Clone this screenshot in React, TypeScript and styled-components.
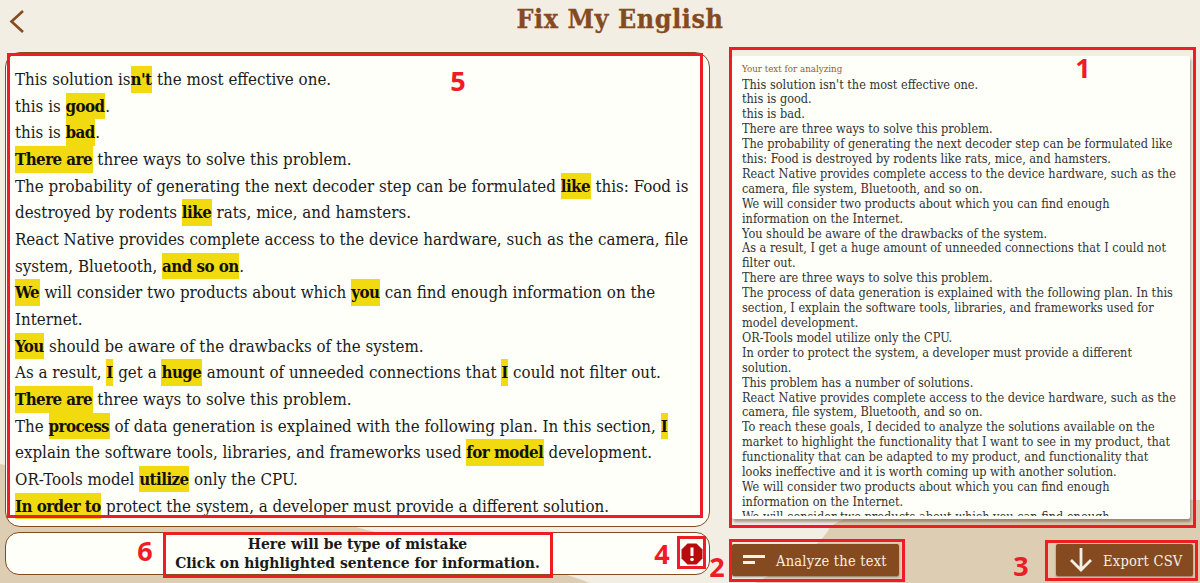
import React from "react";
import styled, { createGlobalStyle } from "styled-components";

const Global = createGlobalStyle`
  html, body { margin: 0; padding: 0; height: 583px; overflow: hidden; }
  #root { height: 583px; }
`;
const Fam = `"DejaVu Serif Condensed", "DejaVu Serif", serif`;
const Brown = "#854a20";

const Page = styled.div`
  position: relative; width: 1200px; height: 583px; overflow: hidden; background: #f3eee3;
  font-family: ${Fam}; display: flex; flex-direction: column;
`;
const Backdrop = styled.svg`position:absolute;inset:0;width:1200px;height:583px;`;
const Header = styled.header`
  position: relative; height: 52px; display:flex; align-items:flex-start; justify-content:center; padding-left:40px;
`;
const Back = styled.button`
  position:absolute; left:8px; top:8px; width:20px; height:28px; padding:0; border:0; background:none; display:flex;
`;
const Title = styled.h1`
  margin: 0; font-size: 26.6px; line-height: 38px; color: ${Brown}; font-weight: 700; letter-spacing: .6px;
  -webkit-text-stroke: .3px ${Brown};
`;
const Content = styled.main`
  position: relative; flex: 1; display: grid; grid-template-columns: 705px 1fr; padding-left: 5px; column-gap: 22px;
`;
const LeftCol = styled.section`display:flex;flex-direction:column;gap:5px;`;
const TextPanel = styled.div`
  height: 475px; box-sizing: border-box; background:#fdfff8; border:1px solid ${Brown}; border-radius:15px;
  padding: 13px 9px 0; font-size: 16.8px; line-height: 26.65px; color:#1b1b1b; overflow:hidden;
`;
const Hl = styled.b`
  display:inline-block; background:#f1da10; color:#111; font-weight:700; letter-spacing:-.55px; padding-right:.55px; height:26.65px;
`;
const Sent = styled.div``;
const InfoBar = styled.div`
  height: 43px; box-sizing:border-box; background:#fdfff8; border:1px solid ${Brown}; border-radius:14px;
  display:flex; align-items:center; justify-content:center; position:relative; padding-bottom:2px;
  font-size:15.5px; line-height:19px; font-weight:700; color:#1a1a1a; text-align:center;
`;
const InfoIcon = styled.svg`position:absolute;right:6px;top:10px;width:22px;height:22px;`;
const RightCol = styled.section`display:flex;flex-direction:column;padding-right:7px;`;
const Card = styled.div`
  margin-top: 4px; width: 458px; height: 463px; box-sizing:border-box; background:#fdfff8; border-radius:2px;
  box-shadow: 1px 3px 3px rgba(70,50,30,.45); padding: 7px 0 0 10px; overflow:hidden;
`;
const CardLabel = styled.div`font-size:9.7px;line-height:12px;color:#9a5a30;margin-bottom:2.5px;`;
const CardText = styled.div`width:437px;font-size:12.6px;line-height:14.9px;color:#333;height:438px;overflow:hidden;`;
const Actions = styled.div`display:flex;justify-content:space-between;margin-top:25px;`;
const Btn = styled.button<{ $w: number }>`
  width:${p=>p.$w}px; height:32px; background:${Brown}; border:0; border-radius:2px; box-shadow:0 1px 2px rgba(60,40,20,.5);
  color:#f5f0e4; font-family:${Fam}; font-size:14.6px; letter-spacing:.2px; display:flex; align-items:center; padding:0;
`;
const BtnIcon = styled.svg`flex:none;`;
const Annot = styled.div<{ $x:number;$y:number;$w:number;$h:number }>`
  position:absolute; left:${p=>p.$x}px; top:${p=>p.$y}px; width:${p=>p.$w}px; height:${p=>p.$h}px; box-sizing:border-box;
  border:3px solid #ee1c25; pointer-events:none;
`;
const Num = styled.span<{ $x:number;$y:number }>`
  position:absolute; left:${p=>p.$x}px; top:${p=>p.$y}px; transform:translate(-50%,-50%); color:#ee1c25;
  font-family:"Open Sans",sans-serif; font-weight:700; font-size:27px; line-height:1;
`;

const H = Hl;
export default function App(){
  return (
    <Page>
      <Global/>
      <Backdrop viewBox="0 0 1200 583" aria-hidden="true">
        <path d="M0 464 C 120 490 280 505 367 530 C 450 550 530 560 590 583 L0 583Z" fill="#ddcdb3"/>
        <path d="M1200 500 C 1050 495 880 490 830 527 C 822 545 790 565 755 583 L1200 583Z" fill="#ddcdb3"/>
      </Backdrop>
      <Header>
        <Back aria-label="Back">
          <svg width="20" height="28" viewBox="0 0 20 28" fill="none"><path d="M15 3 L3.5 13.5 L15 24" stroke="#854a20" strokeWidth="2.6"/></svg>
        </Back>
        <Title>Fix My English</Title>
      </Header>
      <Content>
        <LeftCol>
          <TextPanel>
            <Sent>This solution is<H>n't</H> the most effective one.</Sent>
            <Sent>this is <H>good</H>.</Sent>
            <Sent>this is <H>bad</H>.</Sent>
            <Sent><H>There are</H> three ways to solve this problem.</Sent>
            <Sent>The probability of generating the next decoder step can be formulated <H>like</H> this: Food is destroyed by rodents <H>like</H> rats, mice, and hamsters.</Sent>
            <Sent>React Native provides complete access to the device hardware, such as the camera, file system, Bluetooth, <H>and so on</H>.</Sent>
            <Sent><H>We</H> will consider two products about which <H>you</H> can find enough information on the Internet.</Sent>
            <Sent><H>You</H> should be aware of the drawbacks of the system.</Sent>
            <Sent>As a result, <H>I</H> get a <H>huge</H> amount of unneeded connections that <H>I</H> could not filter out.</Sent>
            <Sent><H>There are</H> three ways to solve this problem.</Sent>
            <Sent>The <H>process</H> of data generation is explained with the following plan. In this section, <H>I</H> explain the software tools, libraries, and frameworks used <H>for model</H> development.</Sent>
            <Sent>OR-Tools model <H>utilize</H> only the CPU.</Sent>
            <Sent><H>In order to</H> protect the system, a developer must provide a different solution.</Sent>
          </TextPanel>
          <InfoBar>
            <span>Here will be type of mistake<br/>Click on highlighted sentence for information.</span>
            <InfoIcon viewBox="0 0 22 22"><path d="M6.5 0.5H15.5L21.5 6.5V15.5L15.5 21.5H6.5L0.5 15.5V6.5Z" fill="#b80c0c"/><path d="M11 4.5V13" stroke="#fff" strokeWidth="3"/><circle cx="11" cy="16.5" r="1.8" fill="#fff"/></InfoIcon>
          </InfoBar>
        </LeftCol>
        <RightCol>
          <Card>
            <CardLabel>Your text for analyzing</CardLabel>
            <CardText>
              This solution isn't the most effective one.<br/>
              this is good.<br/>
              this is bad.<br/>
              There are three ways to solve this problem.<br/>
              The probability of generating the next decoder step can be formulated like this: Food is destroyed by rodents like rats, mice, and hamsters.<br/>
              React Native provides complete access to the device hardware, such as the camera, file system, Bluetooth, and so on.<br/>
              We will consider two products about which you can find enough information on the Internet.<br/>
              You should be aware of the drawbacks of the system.<br/>
              As a result, I get a huge amount of unneeded connections that I could not filter out.<br/>
              There are three ways to solve this problem.<br/>
              The process of data generation is explained with the following plan. In this section, I explain the software tools, libraries, and frameworks used for model development.<br/>
              OR-Tools model utilize only the CPU.<br/>
              In order to protect the system, a developer must provide a different solution.<br/>
              This problem has a number of solutions.<br/>
              React Native provides complete access to the device hardware, such as the camera, file system, Bluetooth, and so on.<br/>
              To reach these goals, I decided to analyze the solutions available on the market to highlight the functionality that I want to see in my product, that functionality that can be adapted to my product, and functionality that looks ineffective and it is worth coming up with another solution.<br/>
              We will consider two products about which you can find enough information on the Internet.<br/>
              We will consider two products about which you can find enough information on the Internet.
            </CardText>
          </Card>
          <Actions>
            <Btn $w={167}>
              <BtnIcon width="44" height="32" viewBox="0 0 44 32"><path d="M11 12.5H33M11 18.5H23" stroke="#f5f0e4" strokeWidth="3"/></BtnIcon>
              Analyze the text
            </Btn>
            <Btn $w={137}>
              <BtnIcon width="47" height="32" viewBox="0 0 47 32"><path d="M25 4V25M15 16L25 26L35 16" stroke="#f5f0e4" strokeWidth="2.8" fill="none"/></BtnIcon>
              Export CSV
            </Btn>
          </Actions>
        </RightCol>
      </Content>
      <Annot $x={7} $y={53} $w={696} $h={465}/>
      <Annot $x={729} $y={47} $w={467} $h={481}/>
      <Annot $x={729} $y={539} $w={176} $h={43}/>
      <Annot $x={1045} $y={540} $w={153} $h={41}/>
      <Annot $x={677} $y={536} $w={29} $h={33}/>
      <Annot $x={163} $y={532} $w={390} $h={46}/>
      <Num $x={458} $y={80}>5</Num>
      <Num $x={1083} $y={67}>1</Num>
      <Num $x={145} $y={550}>6</Num>
      <Num $x={662} $y={553}>4</Num>
      <Num $x={717} $y={566}>2</Num>
      <Num $x={1021} $y={565}>3</Num>
    </Page>
  );
}
